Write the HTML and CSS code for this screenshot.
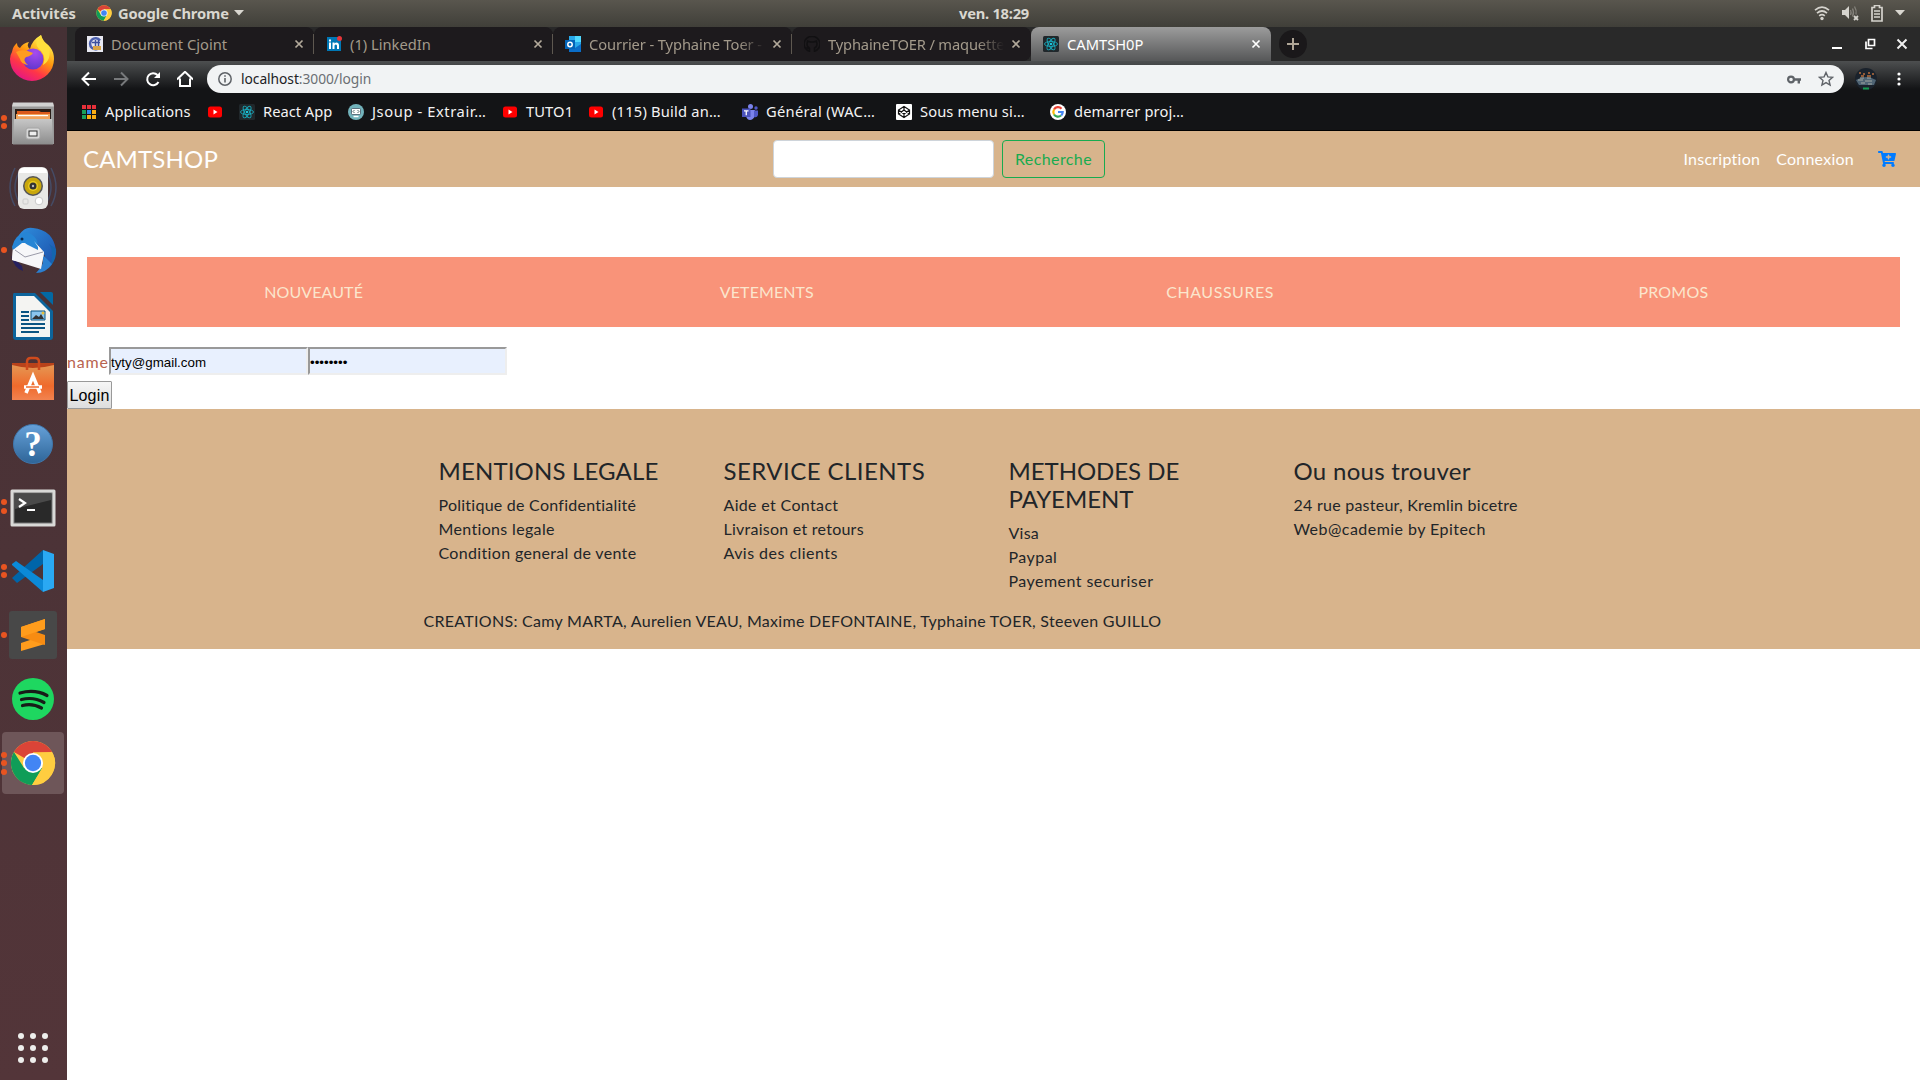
FILE: index.html
```html
<!DOCTYPE html>
<html lang="fr">
<head>
<meta charset="utf-8">
<title>CAMTSH0P</title>
<link rel="stylesheet" href="styles.css">
</head>
<body>
<svg width="0" height="0" class="defs" aria-hidden="true">
  <defs>
    <symbol id="chrome" viewBox="0 0 48 48">
      <circle cx="24" cy="24" r="23" fill="#fc4"/>
      <path d="M24 24 4.1 12.5A23 23 0 0 1 43.9 12.5L24 13Z" fill="#db4437"/>
      <path d="M4.1 12.5A23 23 0 0 0 23 47l10.500-17.500L24 24l-9.500 5Z" fill="#0f9d58"/>
      <path d="M24 13h20.200A23 23 0 0 1 23 47l10.500-17.500Z" fill="#ffcd40"/>
      <circle cx="24" cy="24" r="10.500" fill="#fff"/>
      <circle cx="24" cy="24" r="8.500" fill="#4285f4"/>
    </symbol>
    <symbol id="react" viewBox="0 0 16 16">
      <rect width="16" height="16" rx="1.500" fill="#20272b"/>
      <g fill="none" stroke="#19a9bb" stroke-width=".9">
        <ellipse cx="8" cy="8" rx="6.500" ry="2.500"/>
        <ellipse cx="8" cy="8" rx="6.500" ry="2.500" transform="rotate(60 8 8)"/>
        <ellipse cx="8" cy="8" rx="6.500" ry="2.500" transform="rotate(120 8 8)"/>
      </g>
      <circle cx="8" cy="8" r="1.300" fill="#19c5dc"/>
    </symbol>
    <symbol id="youtube" viewBox="0 0 16 16">
      <rect x="1" y="2.500" width="14" height="11" rx="2.500" fill="#f00"/>
      <path d="M6.500 5.500v5L10.500 8Z" fill="#fff"/>
    </symbol>
    <symbol id="close" viewBox="0 0 10 10">
      <path d="M1.500 1.500l7 7M8.500 1.500l-7 7" stroke="currentColor" stroke-width="1.700"/>
    </symbol>
  </defs>
</svg>

<header class="topbar">
  <span class="activities">Activités</span>
  <div class="app-menu">
    <svg class="app-icon"><use href="#chrome"/></svg>
    <span class="app-name">Google Chrome</span>
    <svg class="caret" viewBox="0 0 10 6"><path d="M0 0h10L5 5.500Z" fill="currentColor"/></svg>
  </div>
  <span class="clock">ven. 18:29</span>
  <div class="status">
    <svg width="16" height="16" viewBox="0 0 16 16" fill="none" stroke="#d5d3cd" stroke-width="1.700"><path d="M1 5.200Q8-.8 15 5.200M3 8.200Q8 3.800 13 8.200M5.200 10.800Q8 8.500 10.800 10.800"/><circle cx="8" cy="13.500" r="1.700" fill="#d5d3cd" stroke="none"/></svg>
    <svg width="17" height="16" viewBox="0 0 17 16" fill="none" stroke="#85827b" stroke-width="1.300"><path d="M0 5h3l4-4v13L3 10H0Z" fill="#d5d3cd" stroke="none"/><path d="M8.500 5q1.200 2.500 0 5M10.500 3.500q2 4 0 8M12.500 1.500q2.500 4 1.500 8"/><path d="M12 11l4 4M16 11l-4 4" stroke="#d5d3cd" stroke-width="1.800"/></svg>
    <svg width="12" height="17" viewBox="0 0 12 17"><path d="M3.500.5h5v2H11V16H1V2.500h2.500Z" fill="none" stroke="#d5d3cd" stroke-width="1.700"/><path d="M3 6h6M3 9h6M3 12h6" stroke="#d5d3cd" stroke-width="1.600"/></svg>
    <svg class="caret" viewBox="0 0 10 6"><path d="M0 0h10L5 5.500Z" fill="currentColor"/></svg>
  </div>
</header>

<div class="desktop">
  <nav class="dock">
    <div class="dock-item">
      <svg viewBox="0 0 48 48">
        <defs>
          <linearGradient id="fx" x1=".8" y1=".1" x2=".3" y2="1"><stop offset="0" stop-color="#fff44f"/><stop offset=".4" stop-color="#ff980e"/><stop offset=".7" stop-color="#ff3647"/><stop offset="1" stop-color="#e31587"/></linearGradient>
          <radialGradient id="fxg" cx=".6" cy=".2" r=".9"><stop offset="0" stop-color="#a74bf0"/><stop offset="1" stop-color="#5a35c9"/></radialGradient>
        </defs>
        <path d="M3 18Q4 12 8 9q0 4 3 5 3-5 9-6-3 4 1 7 2-9 11-14 1 6 6 9l3 3q4 5 4 12A22 22 0 0 1 1 25q0-4 2-7Z" fill="url(#fx)"/>
        <circle cx="24" cy="25" r="10.500" fill="url(#fxg)"/>
        <path d="M7 18q7-4 17 1-2 3-7 4-4 3 2 8-7-1-8-6Z" fill="#ff9c20"/>
        <path d="M32 1q-8 8-2 14 8 6 4 16 9-5 6-19Q34 8 32 1Z" fill="#ffdf3c"/>
      </svg>
    </div>
    <div class="dock-item dock-item--low">
      <i class="pips"><b></b><b></b></i>
      <svg viewBox="0 0 48 48">
        <defs><linearGradient id="gr" x2="0" y2="1"><stop offset="0" stop-color="#c7c7c7"/><stop offset="1" stop-color="#8c8c8c"/></linearGradient></defs>
        <path d="M4 3h40l1 4v37H3V7Z" fill="#999"/><path d="M4 2.500h40l1 4H3Z" fill="#d2d2d2"/>
        <path d="M6 9h36v11H6Z" fill="#2a1d17"/><path d="M8 11h22l2 1h9v8H8Z" fill="#db5a1c"/><path d="M7 14h34v6H7Z" fill="#f2a45c"/><path d="M9 15h30v1.200H9Z" fill="#fff"/>
        <path d="M5 19h38l1 25.500H4Z" fill="url(#gr)"/>
        <rect x="17" y="28" width="14" height="11" rx="2" fill="#d7d7d7" stroke="#a4a4a4"/><rect x="20" y="31" width="8" height="5" fill="#eee" stroke="#333"/>
      </svg>
    </div>
    <div class="dock-item dock-item--low">
      <svg viewBox="0 0 48 48">
        <g fill="none" stroke="#43618c" stroke-width="1.500" opacity=".55"><path d="M6 4q-10 20 0 38M42 4q10 20 0 38M10 8q-8 16 0 30M38 8q8 16 0 30"/></g>
        <rect x="9" y="3" width="30" height="42" rx="6" fill="#e8e8e6"/><path d="M14 4h20q4 0 4 5H10q0-5 4-5Z" fill="#fff"/>
        <circle cx="24" cy="22" r="10" fill="#555"/><circle cx="24" cy="22" r="8.500" fill="#c9a70c"/><circle cx="24" cy="22" r="5" fill="#ebcb1d"/><circle cx="24" cy="22" r="3.500" fill="#333"/><circle cx="24" cy="22" r="1.200" fill="#bbb"/>
        <circle cx="30" cy="37" r="3.800" fill="#fff" stroke="#c9c9c9"/><rect x="14" y="35" width="5" height="5" rx="1" fill="none" stroke="#ccc"/>
      </svg>
    </div>
    <div class="dock-item">
      <i class="pips"><b></b></i>
      <svg viewBox="0 0 48 48">
        <defs><linearGradient id="tb" x2="1" y2="1"><stop offset="0" stop-color="#2f91e0"/><stop offset="1" stop-color="#1b4aa5"/></linearGradient></defs>
        <path d="M2 30q3 12 12 15l-1-5Z" fill="#25205f"/>
        <path d="M10 9Q16 0 24 2q20 2 23 22-1 14-16 22 6-7 5-16L28 17 7 26Q3 20 10 9Z" fill="url(#tb)"/>
        <path d="M40 18q6 8 0 24 8-8 7-19Z" fill="#1465af"/><path d="M33 28q4 10-6 19 10 0 16-9Z" fill="#2b7fd0"/>
        <path d="M4 20 25 15 35 26 32 43 3 34Z" fill="#f5f5f7"/><path d="M4 21l12 9 18-4" fill="none" stroke="#a7a7b5"/>
        <path d="M3 21Q6 8 18 6q12 4 11 18L15 17 4 24Z" fill="#2685d5"/><path d="M4 24 13 17l3 0 10 10 5-3-6-9 10 12-3 14L3 34Z" fill="#f7f7f9"/><path d="M6 24l10 7 18-5" fill="none" stroke="#9a9aa8"/><circle cx="13" cy="13" r="1.500" fill="#09294f"/>
      </svg>
    </div>
    <div class="dock-item dock-item--low">
      <svg viewBox="0 0 48 48">
        <path d="M5 1h21l18 18v26q0 3-3 3H7q-3 0-3-3V3q0-2 1-2Z" fill="#0c649c"/>
        <path d="M31 0h11q2 0 2 2v11Z" fill="#0369a3"/>
        <path d="M7 4h18l16 16v25H7Z" fill="#f4f4f2"/>
        <path d="M12 20h8M12 24h8M12 28h8M12 32h24M12 36h24M12 40h18" stroke="#0b5482" stroke-width="2"/>
        <path d="M22 19h14v9H22Z" fill="#8bc5ed" stroke="#0b5482"/><path d="M23 27l4-4 3 2 2-3 3 5Z" fill="#333"/><circle cx="34" cy="21" r="1.500" fill="#e8bd39"/>
      </svg>
    </div>
    <div class="dock-item dock-item--low">
      <svg viewBox="0 0 48 48">
        <defs><linearGradient id="so" x2="0" y2="1"><stop offset="0" stop-color="#e59753"/><stop offset=".6" stop-color="#ef6a2c"/><stop offset="1" stop-color="#f28350"/></linearGradient></defs>
        <path d="M3 7h42v6H3Z" fill="#b8421a"/><path d="M3 9q21 6 42 0v35H3Z" fill="url(#so)"/>
        <path d="M18 14V6q0-4 4-4h4q4 0 4 4v8" fill="none" stroke="#cf4a1c" stroke-width="2.500"/>
        <path d="M17 37l7-17 7 17M15 31h18" fill="none" stroke="#fff" stroke-width="3.500"/><path d="M17 31h13" stroke="#ef6a2c" stroke-width="1.500"/>
      </svg>
    </div>
    <div class="dock-item dock-item--low">
      <svg viewBox="0 0 48 48">
        <defs><linearGradient id="he" x2="0" y2="1"><stop offset="0" stop-color="#66a1d9"/><stop offset="1" stop-color="#2e6598"/></linearGradient></defs>
        <circle cx="24" cy="24" r="19.500" fill="url(#he)" stroke="#3f76ab"/>
        <text x="24" y="36" class="help-mark">?</text>
      </svg>
    </div>
    <div class="dock-item dock-item--low">
      <i class="pips"><b></b><b></b></i>
      <svg viewBox="0 0 48 48">
        <rect x="1.500" y="5.500" width="45" height="37" rx="1.500" fill="#d9d9d7"/><rect x="5" y="9" width="38" height="30" fill="#292929" stroke="#777"/><path d="M6 10h36v6L6 25Z" fill="#4a4a4a"/>
        <path d="M10 15l6 4-6 4M18 26h8" fill="none" stroke="#fff" stroke-width="2.200"/>
      </svg>
    </div>
    <div class="dock-item">
      <i class="pips"><b></b><b></b></i>
      <svg viewBox="0 0 48 48">
        <path d="M3 31 34 3v14L8 36Z" fill="#0065a9"/><path d="M3 17l4-3 27 19v12L3 18Z" fill="#0b8ad8"/><path d="M34 3l11 4v34l-11 4Z" fill="#2aa9f3"/>
      </svg>
    </div>
    <div class="dock-item">
      <i class="pips"><b></b></i>
      <svg viewBox="0 0 48 48">
        <rect width="48" height="48" rx="3" fill="#484848"/>
        <path d="M12 16l24-8v10l-24 8Z" fill="#ff9c1c"/><path d="M12 32l24-8v9l-24 7Z" fill="#ff9c1c"/><path d="M12 16v10l24 8V24Z" fill="#f78c12"/><path d="M12 16v10l24-8V8Z" fill="#ff9c1c"/>
      </svg>
    </div>
    <div class="dock-item">
      <svg viewBox="0 0 48 48">
        <circle cx="24" cy="24" r="21" fill="#1ed760"/>
        <path d="M11 18q15-4 27 2.500M12.500 24.500q12-3 22.500 3M13.500 30.500q10-2.500 19 2.500" fill="none" stroke="#171c18" stroke-width="3.200" stroke-linecap="round"/>
      </svg>
    </div>
    <div class="dock-item dock-item--active">
      <i class="pips"><b></b><b></b><b></b></i>
      <svg class="dock-chrome"><use href="#chrome"/></svg>
    </div>
    <svg class="show-apps" viewBox="0 0 32 32" fill="#eeeeec"><circle cx="4" cy="4" r="3"/><circle cx="16" cy="4" r="3"/><circle cx="28" cy="4" r="3"/><circle cx="4" cy="16" r="3"/><circle cx="16" cy="16" r="3"/><circle cx="28" cy="16" r="3"/><circle cx="4" cy="28" r="3"/><circle cx="16" cy="28" r="3"/><circle cx="28" cy="28" r="3"/></svg>
  </nav>

  <main class="browser">
    <div class="tabs">
      <div class="tab">
        <svg class="favicon" viewBox="0 0 16 16"><rect width="16" height="16" fill="#e8e8f1"/><path d="M13 4.500A5.500 5.500 0 1 0 13 11" fill="none" stroke="#4c5fae" stroke-width="2.500"/><path d="M5 6.500h8M8.500 4v7M11.500 4v7" stroke="#3b4f9f" stroke-width="1.500"/><path d="M6 10h8v4H6Z" fill="#d9a446"/></svg>
        <span class="tab-title t-cjoint">Document Cjoint</span><svg class="tab-close"><use href="#close"/></svg>
      </div>
      <div class="tab">
        <svg class="favicon" viewBox="0 0 16 16"><path d="M1 1h14v14H1Z" fill="#0077b5"/><path d="M3 6.500h2V13H3ZM3 3.500h2v2H3ZM6.500 6.500h2v1q2-2 4 0 .5 1 .5 2V13h-2V9.500q-1.200-2-2.500 0V13h-2Z" fill="#fff"/><circle cx="13.500" cy="2.500" r="2.500" fill="#e8363a"/></svg>
        <span class="tab-title">(1) LinkedIn</span><svg class="tab-close"><use href="#close"/></svg>
      </div>
      <div class="tab">
        <svg class="favicon" viewBox="0 0 16 16"><path d="M4 0h12v15H4Z" fill="#28a8ea"/><path d="M10 0h6v6h-6Z" fill="#50d9ff"/><path d="M4 9l6 3 6-4v8H4Z" fill="#0a6dc8"/><rect y="4" width="10" height="9" fill="#0364b8"/><circle cx="5" cy="8.500" r="2.200" fill="none" stroke="#fff" stroke-width="1.500"/></svg>
        <span class="tab-title tab-title--fade t-courrier">Courrier - Typhaine Toer -</span><svg class="tab-close"><use href="#close"/></svg>
      </div>
      <div class="tab tab--nosep">
        <svg class="favicon" viewBox="0 0 16 16"><path d="M8 .5a7.500 7.500 0 0 0-2.500 14.700v-2.700q-2 .3-2.800-1.500M8 .5a7.500 7.500 0 0 1 2.500 14.700V12q2.500-1 2.500-4l-.5-3-3 1h-3l-3-1-.5 3q0 3 2.500 4" fill="none" stroke="#111012" stroke-width="1.500"/></svg>
        <span class="tab-title tab-title--fade t-github">TyphaineTOER / maquette</span><svg class="tab-close"><use href="#close"/></svg>
      </div>
      <div class="tab tab--active">
        <svg class="favicon"><use href="#react"/></svg>
        <span class="tab-title">CAMTSH0P</span><svg class="tab-close"><use href="#close"/></svg>
      </div>
      <span class="new-tab"><svg viewBox="0 0 12 12"><path d="M6 0v12M0 6h12" stroke="#b0a697" stroke-width="2"/></svg></span>
      <div class="window-buttons">
        <svg viewBox="0 0 12 12"><path d="M1 10h10" stroke="#fff" stroke-width="2"/></svg>
        <svg viewBox="0 0 12 12" fill="none" stroke="#fff" stroke-width="1.700"><path d="M4.500 1.500h6v6h-6Z"/><path d="M2 3.500v7h6.500"/></svg>
        <svg viewBox="0 0 12 12"><path d="M1.500 1.500l9 9M10.500 1.500l-9 9" stroke="#f0f0f0" stroke-width="2"/></svg>
      </div>
    </div>

    <div class="toolbar">
      <svg class="nav-icon" viewBox="0 0 16 16"><path d="M15 8H2M8 1.500 1.500 8 8 14.500" fill="none" stroke="#fff" stroke-width="2"/></svg>
      <svg class="nav-icon" viewBox="0 0 16 16"><path d="M1 8h13M8 1.500 14.500 8 8 14.500" fill="none" stroke="#77797b" stroke-width="2"/></svg>
      <svg class="nav-icon" viewBox="0 0 16 16"><path d="M13.500 11A6 6 0 1 1 12.500 4" fill="none" stroke="#fff" stroke-width="2"/><path d="M15 1v6H9Z" fill="#fff"/></svg>
      <svg class="nav-icon" viewBox="0 0 16 16"><path d="M0 8.500 8 .8l8 7.700M3 7.500V15h10V7.500" fill="none" stroke="#fff" stroke-width="2"/></svg>
      <div class="omnibox">
        <svg class="info" viewBox="0 0 14 14"><circle cx="7" cy="7" r="6.200" fill="none" stroke="#5f6368" stroke-width="1.500"/><path d="M7 6v4.500M7 3.200v1.600" stroke="#5f6368" stroke-width="1.600"/></svg>
        <span class="url"><span class="host">localhost</span>:3000/login</span>
        <svg class="key" viewBox="0 0 14 9"><circle cx="4" cy="4.500" r="2.900" fill="none" stroke="#5f6368" stroke-width="2.200"/><path d="M7 4.500h7M11.800 4.500v4" stroke="#5f6368" stroke-width="2.400"/></svg>
        <svg class="star" viewBox="0 0 16 16"><path d="M8 1.500l1.900 4.400 4.700.4-3.600 3.100 1.100 4.700L8 11.600l-4.100 2.500L5 9.400 1.400 6.300l4.700-.4Z" fill="none" stroke="#5f6368" stroke-width="1.400"/></svg>
      </div>
      <svg class="avatar" viewBox="0 0 22 22"><circle cx="11" cy="11" r="11" fill="#1a222c"/><path d="M4 5h2M8 6h2M13 5h2M17 6h2M6 8h3M12 8h4" stroke="#b86f3e" stroke-width="1.600"/><path d="M1 12q10-6 20 0l-2 5H4Z" fill="#4f6474"/><path d="M3 12h5M10 13h7M5 10h4M12 10h4M6 15h4M13 16h4" stroke="#a2a8a2" stroke-width="1.100"/><path d="M8 20.500h6" stroke="#159b50" stroke-width="2"/></svg>
      <svg class="menu-dots" viewBox="0 0 4 14" fill="#fff"><circle cx="2" cy="2" r="1.600"/><circle cx="2" cy="7" r="1.600"/><circle cx="2" cy="12" r="1.600"/></svg>
    </div>

    <div class="bookmarks">
      <div class="bookmark bm-apps"><svg viewBox="0 0 14 14"><path d="M0 0h4v4H0ZM5 0h4v4H5ZM10 0h4v4h-4Z" fill="#e8303a"/><path d="M0 5h4v4H0Z" fill="#19a05a"/><path d="M5 5h4v4H5Z" fill="#2f86ee"/><path d="M10 5h4v4h-4ZM5 10h4v4H5ZM10 10h4v4h-4Z" fill="#f9ad14"/><path d="M0 10h4v4H0Z" fill="#19a05a"/></svg><span>Applications</span></div>
      <div class="bookmark bm-yt"><svg><use href="#youtube"/></svg></div>
      <div class="bookmark bm-react"><svg><use href="#react"/></svg><span>React App</span></div>
      <div class="bookmark bm-jsoup"><svg viewBox="0 0 16 16"><circle cx="8" cy="8" r="8" fill="#72b3bb"/><rect x="3.500" y="4.500" width="9" height="6" rx="1" fill="#fff" stroke="#345" stroke-width=".7"/><path d="M6.500 6 5 7.500 6.500 9M9.500 6 11 7.500 9.500 9" fill="none" stroke="#244" stroke-width=".8"/><path d="M5.500 12.500h5" stroke="#fff" stroke-width="1.500"/></svg><span>Jsoup - Extrair…</span></div>
      <div class="bookmark bm-tuto"><svg><use href="#youtube"/></svg><span>TUTO1</span></div>
      <div class="bookmark bm-build"><svg><use href="#youtube"/></svg><span>(115) Build an…</span></div>
      <div class="bookmark bm-teams"><svg viewBox="0 0 16 16"><circle cx="8.500" cy="2.500" r="2.500" fill="#7b83eb"/><circle cx="14" cy="4" r="1.700" fill="#5059c9"/><path d="M5 6h8v6q-2 4-5 4t-4-4Z" fill="#7b83eb"/><path d="M12 6.500h4V11q-1 3-4 2Z" fill="#5059c9"/><rect y="4.500" width="8.500" height="8.500" fill="#4b53bc"/><path d="M2 6.800h4.500M4.250 6.800v4.500" stroke="#fff" stroke-width="1.300"/></svg><span>Général (WAC…</span></div>
      <div class="bookmark bm-codepen"><svg viewBox="0 0 16 16"><rect width="16" height="16" rx="1" fill="#fff"/><path d="M8 2.500 13.500 6v4L8 13.500 2.500 10V6ZM8 2.500V6M8 10v3.500M2.500 6 8 10l5.500-4M2.500 10 8 6l5.500 4" fill="none" stroke="#111" stroke-width="1.200"/></svg><span>Sous menu si…</span></div>
      <div class="bookmark bm-google"><svg viewBox="0 0 16 16"><circle cx="8" cy="8" r="8" fill="#fff"/><g fill="none" stroke-width="2.200"><path d="M4 5.500A4.700 4.700 0 0 1 11.500 4.700" stroke="#ea4335"/><path d="M4 5.500a5 5 0 0 0 0 5" stroke="#fbbc05"/><path d="M4 10.500a4.700 4.700 0 0 0 7 1" stroke="#34a853"/><path d="M8 8h4.700q0 2-1.500 3.600" stroke="#4285f4"/></g></svg><span>demarrer proj…</span></div>
    </div>

    <div class="page">
      <div class="shop-header">
        <a class="brand">CAMTSHOP</a>
        <form class="search"><input class="search-input" type="text" aria-label="Recherche"><button class="search-button" type="button">Recherche</button></form>
        <nav class="account">
          <a>Inscription</a><a class="connexion">Connexion</a>
          <svg viewBox="0 0 576 512" fill="#007bff"><path d="M504.700 320H211.600l6.500 32h268.400c15.400 0 26.800 14.300 23.400 29.300l-5.500 24.300C523.100 414.700 536 433.800 536 456c0 31.200-25.500 56.400-56.800 56-29.800-.4-54.400-24.600-55.200-54.400-.4-16.300 6.100-31 16.800-41.500H231.200C241.600 426.200 248 440.300 248 456c0 31.800-26.500 57.400-58.500 55.900-28.500-1.300-51.800-24.400-53.300-52.900-1.200-22 10.400-41.500 28.100-51.600L93.900 64H24C10.700 64 0 53.300 0 40V24C0 10.700 10.700 0 24 0h102.500c11.400 0 21.200 8 23.500 19.200L159.200 64H552c15.400 0 26.800 14.300 23.400 29.300l-47.300 208C525.700 312.200 515.900 320 504.700 320zM408 168h-48v-40c0-8.800-7.200-16-16-16h-16c-8.800 0-16 7.200-16 16v40h-48c-8.800 0-16 7.200-16 16v16c0 8.800 7.200 16 16 16h48v40c0 8.800 7.200 16 16 16h16c8.800 0 16-7.200 16-16v-40h48c8.800 0 16-7.200 16-16v-16c0-8.800-7.200-16-16-16z"/></svg>
        </nav>
      </div>
      <nav class="categories"><a>NOUVEAUTÉ</a><a class="cat-clothes">VETEMENTS</a><a class="cat-shoes">CHAUSSURES</a><a class="cat-promo">PROMOS</a></nav>
      <form class="login">
        <div class="login-fields"><label>name</label><input type="text" value="tyty@gmail.com" aria-label="name"><input type="password" value="12345678" aria-label="password"></div>
        <button class="login-button" type="button">Login</button>
      </form>
      <footer class="footer">
        <div class="container">
          <div class="footer-columns">
            <section><h4 class="h-legal">MENTIONS LEGALE</h4><ul><li>Politique de Confidentialité</li><li class="spaced">Mentions legale</li><li class="spaced">Condition general de vente</li></ul></section>
            <section><h4 class="h-service">SERVICE CLIENTS</h4><ul><li class="spaced">Aide et Contact</li><li>Livraison et retours</li><li class="spaced-more">Avis des clients</li></ul></section>
            <section><h4 class="h-pay">METHODES DE PAYEMENT</h4><ul><li>Visa</li><li class="spaced-more">Paypal</li><li class="spaced-more">Payement securiser</li></ul></section>
            <section><h4 class="h-where">Ou nous trouver</h4><ul><li>24 rue pasteur, Kremlin bicetre</li><li class="spaced-more">Web@cademie by Epitech</li></ul></section>
          </div>
          <p class="credits">CREATIONS: Camy MARTA, Aurelien VEAU, Maxime DEFONTAINE, Typhaine TOER, Steeven GUILLO</p>
        </div>
      </footer>
    </div>
  </main>
</div>
</body>
</html>
```
FILE: styles.css
```css
* { box-sizing: border-box; }
body { margin: 0; width: 1920px; height: 1080px; overflow: hidden; background: #fff; font-family: "Noto Sans", "Open Sans", sans-serif; }
svg { display: block; flex: none; }
.defs { position: absolute; }

/* GNOME top bar */
.topbar { height: 27px; display: flex; align-items: center; padding: 0 15px 1px 12px; background: linear-gradient(#59564e, #403f39); color: #d9d7d0; font-size: 14.700px; font-weight: 700; line-height: 24px; }
.activities { width: 84px; }
.app-menu { display: flex; align-items: center; width: 863px; }
.app-icon { width: 16px; height: 16px; }
.app-name { margin: 0 5px 0 6px; width: 111px; letter-spacing: -.15px; white-space: nowrap; }
.caret { width: 10px; height: 6px; }
.clock { width: 71px; letter-spacing: -.24px; white-space: nowrap; }
.status { margin-left: auto; display: flex; align-items: center; gap: 12px; }

.desktop { display: flex; height: 1053px; }

/* Dock */
.dock { width: 67px; flex: none; display: flex; flex-direction: column; align-items: center; gap: 2.100px; padding: 0 2px 16px 0; background: linear-gradient(#453135, #533539); }
.dock-item { width: 62px; height: 62px; border-radius: 4px; display: flex; align-items: center; justify-content: center; position: relative; }
.dock-item > svg { width: 48px; height: 48px; }
.dock-item--low > svg { margin-top: 3px; }
.dock-item > .dock-chrome { width: 46px; height: 46px; }
.dock-item--active { background: #6e5659; }
.pips { position: absolute; left: -1px; top: 0; bottom: 0; display: flex; flex-direction: column; justify-content: center; gap: 2.500px; }
.pips b { display: block; width: 6px; height: 6px; border-radius: 50%; background: #e95420; }
.help-mark { font: 700 35px "Liberation Serif", serif; fill: #fff; text-anchor: middle; }
.show-apps { width: 32px; height: 32px; margin-top: auto; }

/* Browser frame */
.browser { flex: 1; min-width: 0; display: flex; flex-direction: column; }
.tabs { height: 34px; display: flex; align-items: center; background: #292929; padding-left: 8px; }
.tab { width: 239px; height: 34px; flex: none; display: flex; align-items: center; padding: 0 10px 0 12px; background: #1d1a1d; color: #a39a8b; border-radius: 8px 8px 0 0; position: relative; font-size: 14.700px; }
.tab::after { content: ""; position: absolute; right: 0; top: 7px; width: 1px; height: 20px; background: #5e5850; }
.tab--nosep { border-radius: 8px 8px 8px 0; }
.tab--nosep::after, .tab--active::after { display: none; }
.tab--active { width: 240px; background: linear-gradient(#9c9c9c, #565758); color: #fff; }
.favicon { width: 16px; height: 16px; }
.tab-title { margin-left: 8px; width: 176px; white-space: nowrap; line-height: 26px; padding-bottom: 1px; }
.tab-title--fade { -webkit-mask-image: linear-gradient(90deg, #000 85%, transparent); mask-image: linear-gradient(90deg, #000 85%, transparent); }
.t-courrier { letter-spacing: -.1px; }
.t-github { letter-spacing: -.15px; }
.tab-close { width: 10px; height: 10px; margin-left: auto; color: #b3aa9b; }
.tab--active .tab-close { color: #fff; }
.new-tab { width: 28px; height: 28px; margin-left: 8px; border-radius: 50%; background: #1a181a; display: flex; align-items: center; justify-content: center; }
.new-tab svg { width: 12px; height: 12px; }
.window-buttons { margin-left: auto; display: flex; gap: 20.500px; padding-right: 12px; }
.window-buttons svg { width: 12px; height: 12px; }

.toolbar { height: 34px; display: flex; align-items: center; padding: 2px 19px 0 14px; background: linear-gradient(#4d4f50, #131416 28px); }
.nav-icon { width: 16px; height: 16px; margin-right: 16px; }
.omnibox { width: 1637px; height: 28px; margin-left: -2px; border-radius: 14px; background: #f1f3f4; display: flex; align-items: center; padding: 0 10px 0 11px; }
.info { width: 14px; height: 14px; }
.url { margin-left: 9px; font-size: 13.800px; color: #6b6f73; letter-spacing: -.05px; line-height: 26px; }
.host { color: #202124; }
.key { width: 14px; height: 9px; margin-left: auto; }
.star { width: 16px; height: 16px; margin-left: 17px; }
.avatar { width: 22px; height: 22px; margin-left: 11px; }
.menu-dots { width: 4px; height: 14px; margin-left: auto; }

.bookmarks { height: 36px; padding: 0 0 2px 15px; display: flex; align-items: center; background: #131416; border-bottom: 1px solid #000; color: #f3f3f3; font-size: 14.700px; line-height: 30px; white-space: nowrap; }
.bookmark { display: flex; align-items: center; gap: 8px; flex: none; }
.bookmark svg { width: 16px; height: 16px; }
.bookmark span { margin-top: -1px; }
.bm-apps { width: 125px; gap: 9px; letter-spacing: .1px; }
.bm-apps svg { width: 14px; height: 14px; }
.bm-yt { width: 32px; }
.bm-react { width: 109px; }
.bm-jsoup { width: 154px; letter-spacing: .6px; }
.bm-tuto { width: 86px; letter-spacing: .1px; }
.bm-build { width: 154px; letter-spacing: .2px; }
.bm-teams { width: 154px; letter-spacing: .28px; }
.bm-codepen { width: 154px; letter-spacing: .1px; }
.bm-google { letter-spacing: .12px; }

/* Shop page */
.page { flex: 1; background: #fff; font: 16px/24px Lato, sans-serif; letter-spacing: .25px; color: #212529; }
.shop-header { height: 56px; display: flex; align-items: center; padding: 0 24px 0 16px; background: #d8b48c; color: #fff; }
.brand { font-size: 24px; line-height: 36px; width: 690px; letter-spacing: .17px; }
.search { display: flex; gap: 8px; }
.search-input { width: 221px; height: 38px; border: 1px solid #ced4da; border-radius: 4px; background: #fff; }
.search-button { width: 103px; height: 38px; padding: 0; border: 1px solid #18ab50; border-radius: 4px; background: transparent; color: #18ab50; font: inherit; letter-spacing: .4px; }
.account { margin-left: auto; display: flex; align-items: center; }
.connexion { margin: 0 24px 0 16px; }
.account svg { width: 18px; height: 16px; }
.categories { margin: 70px 20px 0; height: 70px; display: grid; grid-template-columns: repeat(4, 1fr); align-items: center; text-align: center; background: #f99379; color: #fbe6cd; letter-spacing: .1px; }
.cat-clothes { letter-spacing: .1px; }
.cat-shoes { letter-spacing: .55px; }
.cat-promo { letter-spacing: .2px; }
.login { padding-top: 20px; }
.login-fields { display: flex; height: 34px; }
.login-fields label { width: 42px; color: #b86450; letter-spacing: .85px; line-height: 29px; }
.login-fields input { width: 199px; height: 28px; padding: 3px 0 0; border: 2px solid; border-color: #999 #eee #eee #999; border-radius: 0; background: #e8f0fe; color: #000; font: 13.333px "Liberation Sans", sans-serif; letter-spacing: 0; }
.login-button { display: block; width: 45px; height: 28px; padding: 2px 0 0; border: 1px solid #999; border-radius: 1px; background: linear-gradient(#f6f6f6, #ddd); color: #000; font: 16px "Liberation Sans", sans-serif; letter-spacing: .2px; }
.footer { height: 240px; background: #d8b48c; }
.container { width: 1140px; margin: 0 auto; padding-top: 48px; }
.footer-columns { display: grid; grid-template-columns: repeat(4, 285px); }
.footer section { padding: 0 15px; }
h4 { margin: 0 0 8px; font-size: 24px; line-height: 28px; font-weight: 400; }
ul { margin: 0; padding: 0; list-style: none; }
.spaced { letter-spacing: .34px; }
.spaced-more { letter-spacing: .46px; }
.h-legal { letter-spacing: .15px; }
.h-service { letter-spacing: .45px; }
.h-pay { letter-spacing: -.05px; }
.h-where { letter-spacing: .3px; }
.credits { margin: 16px 0 0; letter-spacing: .29px; }
```
